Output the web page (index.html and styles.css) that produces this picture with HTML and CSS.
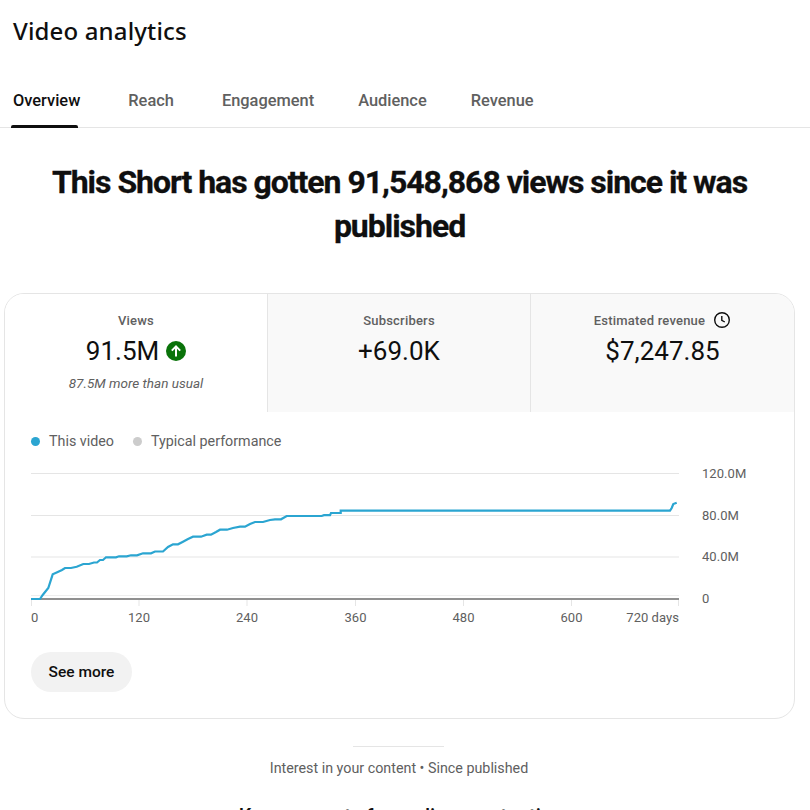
FILE: index.html
```html
<!DOCTYPE html>
<html lang="en">
<head>
    <meta charset="UTF-8">
    <meta name="viewport" content="width=device-width, initial-scale=1.0">
    <title>Video analytics</title>
    <link rel="stylesheet" href="styles.css">
</head>
<body>
    <h1 class="page-title">Video analytics</h1>

    <nav class="tabs">
        <a class="tab active">Overview</a>
        <a class="tab reach">Reach</a>
        <a class="tab">Engagement</a>
        <a class="tab">Audience</a>
        <a class="tab">Revenue</a>
    </nav>

    <h2 class="headline">This Short has gotten 91,548,868 views since it was published</h2>

    <section class="card">
        <div class="metrics">
            <div class="metric selected">
                <div class="metric-label">Views</div>
                <div class="metric-value">
                    91.5M
                    <svg class="up-icon" width="20" height="20" viewBox="0 0 20 20">
                        <circle cx="10" cy="10" r="10" fill="#0a730a"/>
                        <path d="M10 15.5V5.5M5.8 9.6L10 5.4l4.2 4.2" fill="none" stroke="#fff" stroke-width="2"/>
                    </svg>
                </div>
                <div class="metric-note">87.5M more than usual</div>
            </div>
            <div class="metric">
                <div class="metric-label">Subscribers</div>
                <div class="metric-value">+69.0K</div>
            </div>
            <div class="metric">
                <div class="metric-label">
                    Estimated revenue
                    <svg class="clock-icon" width="18" height="18" viewBox="0 0 18 18">
                        <circle cx="9" cy="9" r="7.3" fill="none" stroke="#0f0f0f" stroke-width="1.4"/>
                        <path d="M8.8 5v4.4l3 1.6" fill="none" stroke="#0f0f0f" stroke-width="1.4"/>
                    </svg>
                </div>
                <div class="metric-value">$7,247.85</div>
            </div>
        </div>

        <div class="chart-area">
            <div class="legend">
                <span class="legend-item"><i class="dot blue"></i>This video</span>
                <span class="legend-item"><i class="dot grey"></i>Typical performance</span>
            </div>

            <!-- chart coords: x 0 = left of plot, y 0 = top of svg -->
            <svg class="chart" width="730" height="166" viewBox="0 0 730 166">
                <g stroke="#e5e5e5" stroke-width="1">
                    <path d="M0 11.5H648M0 53.5H648M0 95H648"/>
                    <path d="M0 133.5H648" stroke="#eee"/>
                    <path d="M0.5 136V144M108 136V144M216 136V144M324.5 136V144M432.5 136V144M540.5 136V144M647.5 136V144"/>
                </g>
                <path d="M0 137H648" stroke="#909090" stroke-width="2"/>
                <path fill="none" stroke="#2ba5d1" stroke-width="2.2" d="M0 137H9L11.7 133 17.3 126 21.7 112.3 27.3 109.7 31 108 34 106H40L45.7 104.7 52.3 102H58L63 100.5H66L69 98H72L75 95.3H85L88 94.3H95.7L100 93.3H106L112 91.3H120L124 89.5H132L137 85 142 82.3H147L152 79.7 157 77 162 74.7H170L175.7 72.7H180L185 70 189 67.7H196L202 66 209 64.7H214L219 62 224 60H232L239 58 244 57.3H250L255.7 54H290.7L293 53.2H299L300 51H309.7V48.7H639L640.7 46 642.3 42 645.7 40.7"/>
                <g class="axis-text">
                    <text x="671" y="16">120.0M</text>
                    <text x="671" y="58">80.0M</text>
                    <text x="671" y="99">40.0M</text>
                    <text x="671" y="141">0</text>
                    <text x="0" y="160">0</text>
                    <text x="108" y="160" text-anchor="middle">120</text>
                    <text x="216" y="160" text-anchor="middle">240</text>
                    <text x="324.5" y="160" text-anchor="middle">360</text>
                    <text x="432.5" y="160" text-anchor="middle">480</text>
                    <text x="540.5" y="160" text-anchor="middle">600</text>
                    <text x="648" y="160" text-anchor="end">720 days</text>
                </g>
            </svg>

            <button class="more-btn">See more</button>
        </div>
    </section>

    <div class="next-section">
        <div class="short-rule"></div>
        <p class="next-sub">Interest in your content • Since published</p>
        <h3 class="next-title">Key moments for audience retention</h3>
    </div>
</body>
</html>
```

FILE: styles.css
```css
* {
    margin: 0;
    padding: 0;
    box-sizing: border-box;
}

html, body {
    height: 810px;
    overflow: hidden;
}

body {
    font-family: Roboto, Arial, sans-serif;
    background: white;
    color: #0f0f0f;
}

.page-title {
    font-family: "Noto Sans", sans-serif;
    font-size: 24px;
    font-weight: 500;
    line-height: 32px;
    letter-spacing: 0.15px;
    padding: 15px 0 0 13px;
}

.tabs {
    display: flex;
    gap: 44px;
    height: 81px;
    padding: 42px 0 0 13px;
    border-bottom: 1px solid #e5e5e5;
}

.tab {
    position: relative;
    font-size: 16.4px;
    font-weight: 500;
    line-height: 24px;
    color: #606060;
}

.tab.active {
    color: #0f0f0f;
}

.tab.reach {
    margin-left: 4px;
}

.tab.reach + .tab {
    margin-left: 4px;
}

.tab.active::after {
    content: "";
    position: absolute;
    left: -2px;
    right: 2px;
    top: 36px;
    height: 3px;
    border-radius: 2px 2px 0 0;
    background: #0f0f0f;
}

.headline {
    font-size: 32px;
    font-weight: 700;
    line-height: 44px;
    letter-spacing: -1.03px;
    -webkit-text-stroke: 0.3px #0f0f0f;
    text-align: center;
    padding: 32px 51px 0 40px;
    margin-bottom: 45px;
}

.card {
    margin: 0 15px 0 4px;
    height: 426px;
    border: 1px solid #e5e5e5;
    border-radius: 20px;
    overflow: hidden;
}

.metrics {
    display: grid;
    grid-template-columns: 262px 263px 264px;
    height: 118px;
}

.metric {
    padding-top: 17px;
    text-align: center;
    background: #f9f9f9;
    border-left: 1px solid #e5e5e5;
}

.metric.selected {
    background: white;
    border-left: 0;
}

.metric-label {
    display: flex;
    justify-content: center;
    align-items: center;
    gap: 8px;
    height: 18px;
    font-size: 13px;
    font-weight: 500;
    letter-spacing: 0.2px;
    color: #606060;
}

.metric-value {
    display: flex;
    justify-content: center;
    align-items: center;
    gap: 7px;
    height: 36px;
    margin-top: 4px;
    font-size: 26px;
    line-height: 36px;
}

.metric-note {
    margin-top: 5px;
    font-size: 13.5px;
    line-height: 18px;
    font-style: italic;
    color: #606060;
}

.chart-area {
    padding: 20px 0 0 26px;
}

.legend {
    display: flex;
    gap: 19px;
    height: 18px;
    font-size: 14.3px;
    line-height: 18px;
    color: #606060;
}

.legend-item {
    display: flex;
    align-items: center;
    gap: 9px;
}

.dot {
    width: 9px;
    height: 9px;
    border-radius: 50%;
}

.dot.blue {
    background: #2ba5d1;
}

.dot.grey {
    background: #ccc;
}

.chart {
    display: block;
    margin-top: 12px;
}

.axis-text text {
    font-family: Roboto, Arial, sans-serif;
    font-size: 13px;
    letter-spacing: 0.05px;
    fill: #606060;
}

.more-btn {
    display: block;
    width: 101px;
    height: 40px;
    margin-top: 24px;
    border: none;
    border-radius: 20px;
    background: #f2f2f2;
    color: #0f0f0f;
    font-family: Roboto, Arial, sans-serif;
    font-size: 15.5px;
    font-weight: 500;
}

.next-section {
    text-align: center;
    padding-top: 27px;
}

.short-rule {
    width: 91px;
    height: 1px;
    margin-left: 353px;
    background: #e5e5e5;
}

.next-sub {
    width: 798px;
    margin-top: 11px;
    font-size: 14.3px;
    line-height: 20px;
    color: #606060;
}

.next-title {
    width: 802px;
    margin-top: 24px;
    font-size: 20px;
    font-weight: 500;
    line-height: 28px;
}
```
